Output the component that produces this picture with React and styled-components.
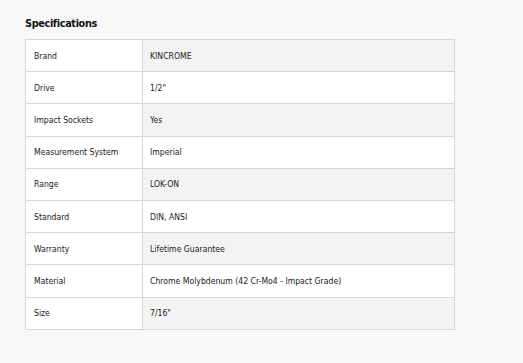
import React from "react";
import styled, { createGlobalStyle } from "styled-components";

const GlobalStyle = createGlobalStyle`
  html, body {
    margin: 0;
    background: #f8f8f8;
  }
  body {
    font-family: "DejaVu Sans Condensed", "Liberation Sans", sans-serif;
    color: #1a1a1a;
  }
`;

const Wrapper = styled.div`
  padding: 17px 0 0 25px;
`;

const Title = styled.h3`
  margin: 0 0 8px;
  font-size: 10.8px;
  font-weight: 700;
  letter-spacing: -0.35px;
  color: #111;
  line-height: 14px;
`;

const Table = styled.table`
  width: 430px;
  border-collapse: collapse;
  border: 1px solid #d6d6d6;
  font-size: 8.6px;
`;

const Row = styled.tr`
  height: 32.2px;
  border-bottom: 1px solid #d6d6d6;
`;

const Label = styled.td`
  width: 100px;
  padding: 0 8px;
  background: #fff;
  border-right: 1px solid #d6d6d6;
`;

const Value = styled.td`
  padding: 0 7px;
  background: ${(p) => (p.$shaded ? "#f3f3f3" : "#fff")};
`;

const specs = [
  ["Brand", "KINCROME"],
  ["Drive", "1/2\""],
  ["Impact Sockets", "Yes"],
  ["Measurement System", "Imperial"],
  ["Range", "LOK-ON"],
  ["Standard", "DIN, ANSI"],
  ["Warranty", "Lifetime Guarantee"],
  ["Material", "Chrome Molybdenum (42 Cr-Mo4 - Impact Grade)"],
  ["Size", "7/16\""],
];

export default function App() {
  return (
    <Wrapper>
      <GlobalStyle />
      <Title>Specifications</Title>
      <Table>
        <tbody>
          {specs.map(([k, v], i) => (
            <Row key={k}>
              <Label>{k}</Label>
              <Value $shaded={i % 2 === 0}>{v}</Value>
            </Row>
          ))}
        </tbody>
      </Table>
    </Wrapper>
  );
}
